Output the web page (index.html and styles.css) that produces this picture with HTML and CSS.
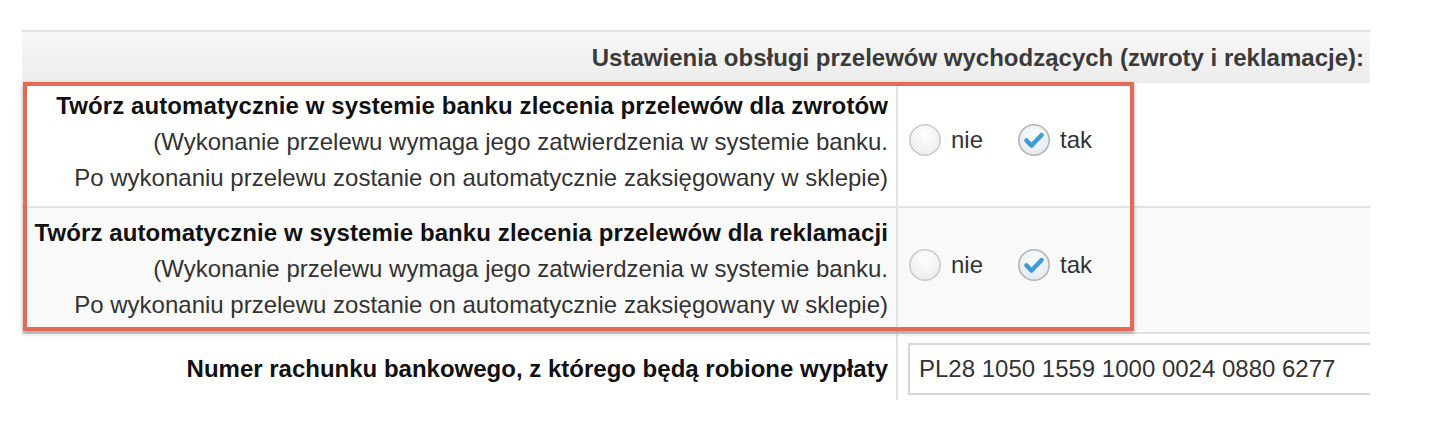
FILE: index.html
```html
<!DOCTYPE html>
<html lang="pl">
<head>
<meta charset="utf-8">
<title>Ustawienia przelewów</title>
<link rel="stylesheet" href="styles.css">
</head>
<body>
<div class="wrap">
  <table class="settings">
    <colgroup><col class="col-label"><col class="col-value"></colgroup>
    <tr class="head">
      <th colspan="2">Ustawienia obsługi przelewów wychodzących (zwroty i reklamacje):</th>
    </tr>
    <tr class="row">
      <td class="label">
        <strong>Twórz automatycznie w systemie banku zlecenia przelewów dla zwrotów</strong><br>
        <span class="note">(Wykonanie przelewu wymaga jego zatwierdzenia w systemie banku.</span><br>
        <span class="note">Po wykonaniu przelewu zostanie on automatycznie zaksięgowany w sklepie)</span>
      </td>
      <td class="value">
        <div class="radios">
          <label class="opt">
            <svg class="radio" width="34" height="34" viewBox="0 0 34 34"><defs><radialGradient id="g1" cx="50%" cy="35%" r="65%"><stop offset="0" stop-color="#ffffff"/><stop offset="1" stop-color="#ececec"/></radialGradient></defs><circle cx="17" cy="17" r="15.2" fill="url(#g1)" stroke="#cacaca" stroke-width="1.6"/></svg>
            <span>nie</span>
          </label>
          <label class="opt">
            <svg class="radio" width="34" height="34" viewBox="0 0 34 34"><defs><radialGradient id="g2" cx="50%" cy="35%" r="65%"><stop offset="0" stop-color="#fbfdff"/><stop offset="1" stop-color="#e3e9ef"/></radialGradient></defs><circle cx="17" cy="17" r="15.2" fill="url(#g2)" stroke="#b4b4b4" stroke-width="1.6"/><path d="M9.4 17.4 L14.6 22.6 L24.6 12" fill="none" stroke="#3d9bd8" stroke-width="4.4" stroke-linecap="round" stroke-linejoin="round"/></svg>
            <span>tak</span>
          </label>
        </div>
      </td>
    </tr>
    <tr class="row alt">
      <td class="label">
        <strong>Twórz automatycznie w systemie banku zlecenia przelewów dla reklamacji</strong><br>
        <span class="note">(Wykonanie przelewu wymaga jego zatwierdzenia w systemie banku.</span><br>
        <span class="note">Po wykonaniu przelewu zostanie on automatycznie zaksięgowany w sklepie)</span>
      </td>
      <td class="value">
        <div class="radios">
          <label class="opt">
            <svg class="radio" width="34" height="34" viewBox="0 0 34 34"><defs><radialGradient id="g3" cx="50%" cy="35%" r="65%"><stop offset="0" stop-color="#ffffff"/><stop offset="1" stop-color="#ececec"/></radialGradient></defs><circle cx="17" cy="17" r="15.2" fill="url(#g3)" stroke="#cacaca" stroke-width="1.6"/></svg>
            <span>nie</span>
          </label>
          <label class="opt">
            <svg class="radio" width="34" height="34" viewBox="0 0 34 34"><defs><radialGradient id="g4" cx="50%" cy="35%" r="65%"><stop offset="0" stop-color="#fbfdff"/><stop offset="1" stop-color="#e3e9ef"/></radialGradient></defs><circle cx="17" cy="17" r="15.2" fill="url(#g4)" stroke="#b4b4b4" stroke-width="1.6"/><path d="M9.4 17.4 L14.6 22.6 L24.6 12" fill="none" stroke="#3d9bd8" stroke-width="4.4" stroke-linecap="round" stroke-linejoin="round"/></svg>
            <span>tak</span>
          </label>
        </div>
      </td>
    </tr>
    <tr class="last">
      <td class="label"><strong>Numer rachunku bankowego, z którego będą robione wypłaty</strong></td>
      <td class="value"><input class="account" type="text" value="PL28 1050 1559 1000 0024 0880 6277"></td>
    </tr>
  </table>
  <div class="highlight"></div>
</div>
</body>
</html>
```
FILE: styles.css
```css
body {
  margin: 0;
  background: #ffffff;
  font-family: "Liberation Sans", Arial, Helvetica, sans-serif;
}

.wrap {
  position: relative;
  width: 1348px;
  margin: 30px 0 0 22px;
}

.settings {
  width: 1348px;
  border-collapse: collapse;
  table-layout: fixed;
  font-size: 24px;
  color: #333333;
}

.col-label { width: 875px; }
.col-value { width: 473px; }

.head th {
  height: 51px;
  padding: 0 6px 0 0;
  border-top: 2px solid #e3e3e3;
  background: linear-gradient(#f7f7f7, #ececec);
  text-align: right;
  font-weight: bold;
  color: #3a3a3a;
}

.row td {
  border-bottom: 2px solid #e2e2e2;
}

.row.alt td {
  background: #f9f9f9;
}

.label {
  padding: 5px 8px 10px 0;
  border-right: 2px solid #e2e2e2;
  text-align: right;
  line-height: 36px;
  vertical-align: middle;
}

.label strong {
  color: #111111;
}

.row .label strong {
  letter-spacing: 0.1px;
}

.row.alt .label {
  padding: 7px 8px 9px 0;
}

.note {
  color: #333333;
}

.value {
  padding: 0 0 10px 10px;
  vertical-align: middle;
}

.radios {
  display: flex;
  align-items: center;
  gap: 34px;
}

.opt {
  display: flex;
  align-items: center;
  gap: 9px;
  color: #333333;
}

.radio {
  display: block;
}

.last td {
  height: 62px;
  padding-top: 4px;
  padding-bottom: 0;
}

.last .label {
  padding-right: 8px;
}

.account {
  display: block;
  box-sizing: border-box;
  width: 100%;
  height: 52px;
  margin: 0;
  padding: 0 0 0 9px;
  border: 2px solid #d6d6d6;
  border-right: 0;
  font-family: "Liberation Sans", Arial, Helvetica, sans-serif;
  font-size: 24px;
  color: #333333;
  background: #ffffff;
}

.highlight {
  position: absolute;
  left: 1px;
  top: 52px;
  width: 1111px;
  height: 249px;
  box-sizing: border-box;
  border: 4px solid #e46a58;
  box-shadow: 0 2px 4px rgba(0, 0, 0, 0.35);
  pointer-events: none;
}
```
